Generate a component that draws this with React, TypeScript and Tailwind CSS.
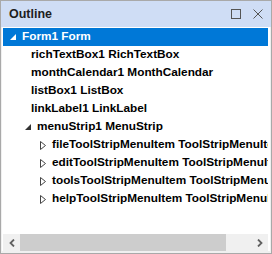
import React from "react";

const font = { fontFamily: '"Liberation Sans", Arial, sans-serif' };

function Solid({ white }: { white?: boolean }) {
  return (
    <svg width="6" height="6" viewBox="0 0 6 6" className="shrink-0">
      <polygon points="6,0 6,6 0,6" fill={white ? "#ffffff" : "#333333"} />
    </svg>
  );
}

function Hollow() {
  return (
    <svg width="6" height="9" viewBox="0 0 6 9" className="shrink-0">
      <polygon points="0.5,0.5 5.5,4.5 0.5,8.5" fill="none" stroke="#444444" strokeWidth="1" />
    </svg>
  );
}

function Row({
  indent,
  icon,
  text,
  selected,
}: {
  indent: string;
  icon?: React.ReactNode;
  text: string;
  selected?: boolean;
}) {
  return (
    <div
      className={`flex h-[18px] items-center whitespace-nowrap text-[11.8px] font-bold ${
        selected ? "bg-[#0078d7] text-white" : "text-black"
      } ${indent}`}
    >
      <div className="flex w-[12px] shrink-0 items-center">{icon}</div>
      <span>{text}</span>
    </div>
  );
}

export default function App() {
  return (
    <div className="h-[254px] w-[272px] overflow-hidden bg-[#f0f0f0]" style={font}>
      <div className="flex h-[254px] flex-col border border-[#a9a9a9]">
        <div className="flex h-[26px] shrink-0 items-center justify-between bg-[#cfddf5] pl-[8px] pr-[8px]">
          <span className="text-[12.5px] font-bold text-[#1e1e1e]">Outline</span>
          <div className="flex items-center gap-[12px]">
            <svg width="10" height="10" viewBox="0 0 10 10">
              <rect x="0.5" y="0.5" width="9" height="9" fill="none" stroke="#555" strokeWidth="1" />
            </svg>
            <svg width="10" height="10" viewBox="0 0 10 10">
              <path d="M0.5 0.5 L9.5 9.5 M9.5 0.5 L0.5 9.5" stroke="#555" strokeWidth="1" />
            </svg>
          </div>
        </div>
        <div className="mx-[1px] mb-[2px] flex min-h-0 flex-1 flex-col bg-white pl-[1px] pr-[2px] pt-[1px]">
          <div className="min-h-0 flex-1 overflow-hidden">
            <Row indent="pl-[7px]" icon={<Solid white />} text="Form1 Form" selected />
            <Row indent="pl-[16px]" text="richTextBox1 RichTextBox" />
            <Row indent="pl-[16px]" text="monthCalendar1 MonthCalendar" />
            <Row indent="pl-[16px]" text="listBox1 ListBox" />
            <Row indent="pl-[16px]" text="linkLabel1 LinkLabel" />
            <Row indent="pl-[22px]" icon={<Solid />} text="menuStrip1 MenuStrip" />
            <Row indent="pl-[37px]" icon={<Hollow />} text="fileToolStripMenuItem ToolStripMenuItem" />
            <Row indent="pl-[37px]" icon={<Hollow />} text="editToolStripMenuItem ToolStripMenuItem" />
            <Row indent="pl-[37px]" icon={<Hollow />} text="toolsToolStripMenuItem ToolStripMenuItem" />
            <Row indent="pl-[37px]" icon={<Hollow />} text="helpToolStripMenuItem ToolStripMenuItem" />
          </div>
          <div className="flex h-[17px] shrink-0 items-stretch bg-[#f0f0f0]">
            <div className="flex w-[17px] items-center justify-center">
              <svg width="6" height="8" viewBox="0 0 6 8">
                <path d="M5 0.5 L1.5 4 L5 7.5" fill="none" stroke="#606060" strokeWidth="1.8" />
              </svg>
            </div>
            <div className="w-[206px] bg-[#cdcdcd]" />
            <div className="flex-1" />
            <div className="flex w-[17px] items-center justify-center">
              <svg width="6" height="8" viewBox="0 0 6 8">
                <path d="M1 0.5 L4.5 4 L1 7.5" fill="none" stroke="#606060" strokeWidth="1.8" />
              </svg>
            </div>
          </div>
        </div>
      </div>
    </div>
  );
}
